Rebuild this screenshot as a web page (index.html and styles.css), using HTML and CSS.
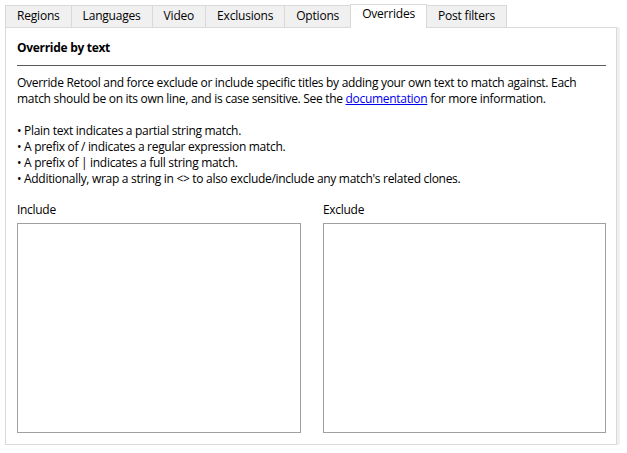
FILE: index.html
```html
<!DOCTYPE html>
<html lang="en">
<head>
<meta charset="utf-8">
<title>Overrides</title>
<link rel="stylesheet" href="styles.css">
</head>
<body>
<div class="window">
  <div class="tabs">
    <div class="tab">Regions</div>
    <div class="tab">Languages</div>
    <div class="tab">Video</div>
    <div class="tab">Exclusions</div>
    <div class="tab">Options</div>
    <div class="tab active">Overrides</div>
    <div class="tab">Post filters</div>
  </div>
  <div class="panel">
    <div class="heading">Override by text</div>
    <div class="rule"></div>
    <p class="para">Override Retool and force exclude or include specific titles by adding your own text to match against. Each match should be on its own line, and is case sensitive. See the <a href="#" class="link">documentation</a> for more information.</p>
    <ul class="bullets">
      <li>Plain text indicates a partial string match.</li>
      <li>A prefix of / indicates a regular expression match.</li>
      <li>A prefix of | indicates a full string match.</li>
      <li>Additionally, wrap a string in &lt;&gt; to also exclude/include any match's related clones.</li>
    </ul>
    <div class="fields">
      <div class="field">
        <div class="label">Include</div>
        <textarea class="box"></textarea>
      </div>
      <div class="field">
        <div class="label">Exclude</div>
        <textarea class="box"></textarea>
      </div>
    </div>
  </div>
</div>
</body>
</html>
```
FILE: styles.css
```css
html, body {
  margin: 0;
  padding: 0;
  background: #ffffff;
}
body {
  font-family: "Segoe UI", "Open Sans", "Noto Sans", sans-serif;
  font-size: 12px;
  line-height: 16px;
  letter-spacing: -0.3px;
  color: #000000;
}
.window {
  padding: 4px 0 0 5px;
}
.tabs {
  display: flex;
  align-items: flex-end;
  height: 23px;
}
.tab {
  box-sizing: border-box;
  height: 22px;
  padding: 2px 11px 0;
  letter-spacing: -0.2px;
  background: #f0f0f0;
  border: 1px solid #d9d9d9;
  border-bottom: none;
  border-right: none;
  white-space: nowrap;
  text-align: center;
}
.tab:last-child {
  border-right: 1px solid #d9d9d9;
}
.tab.active {
  height: 24px;
  margin-bottom: -1px;
  padding-top: 1px;
  background: #ffffff;
  border-right: 1px solid #d9d9d9;
  position: relative;
  z-index: 1;
}
.tab.active + .tab {
  border-left: none;
}
.panel {
  box-sizing: border-box;
  width: 612px;
  height: 418px;
  border: 1px solid #d9d9d9;
  box-shadow: 3px 0 0 #f0f0f0;
  padding: 12px 10px 11px 11px;
  display: flex;
  flex-direction: column;
}
.heading {
  font-weight: bold;
}
.rule {
  height: 1px;
  background: #5a5a5a;
  margin: 9px 0 9px;
}
.para {
  margin: 0 0 16px;
}
.link {
  color: #0000ee;
  text-decoration: underline;
}
.bullets {
  margin: 0;
  padding: 0;
  list-style: none;
}
.bullets li::before {
  content: "\2022\a0";
}
.fields {
  flex: 1;
  display: grid;
  grid-template-columns: 284px 283px;
  column-gap: 22px;
  margin-top: 15px;
}
.field {
  display: flex;
  flex-direction: column;
}
.label {
  margin-bottom: 5px;
}
.box {
  flex: 1;
  box-sizing: border-box;
  margin: 0;
  border: 1px solid #a0a0a0;
  resize: none;
  background: #ffffff;
}
```
